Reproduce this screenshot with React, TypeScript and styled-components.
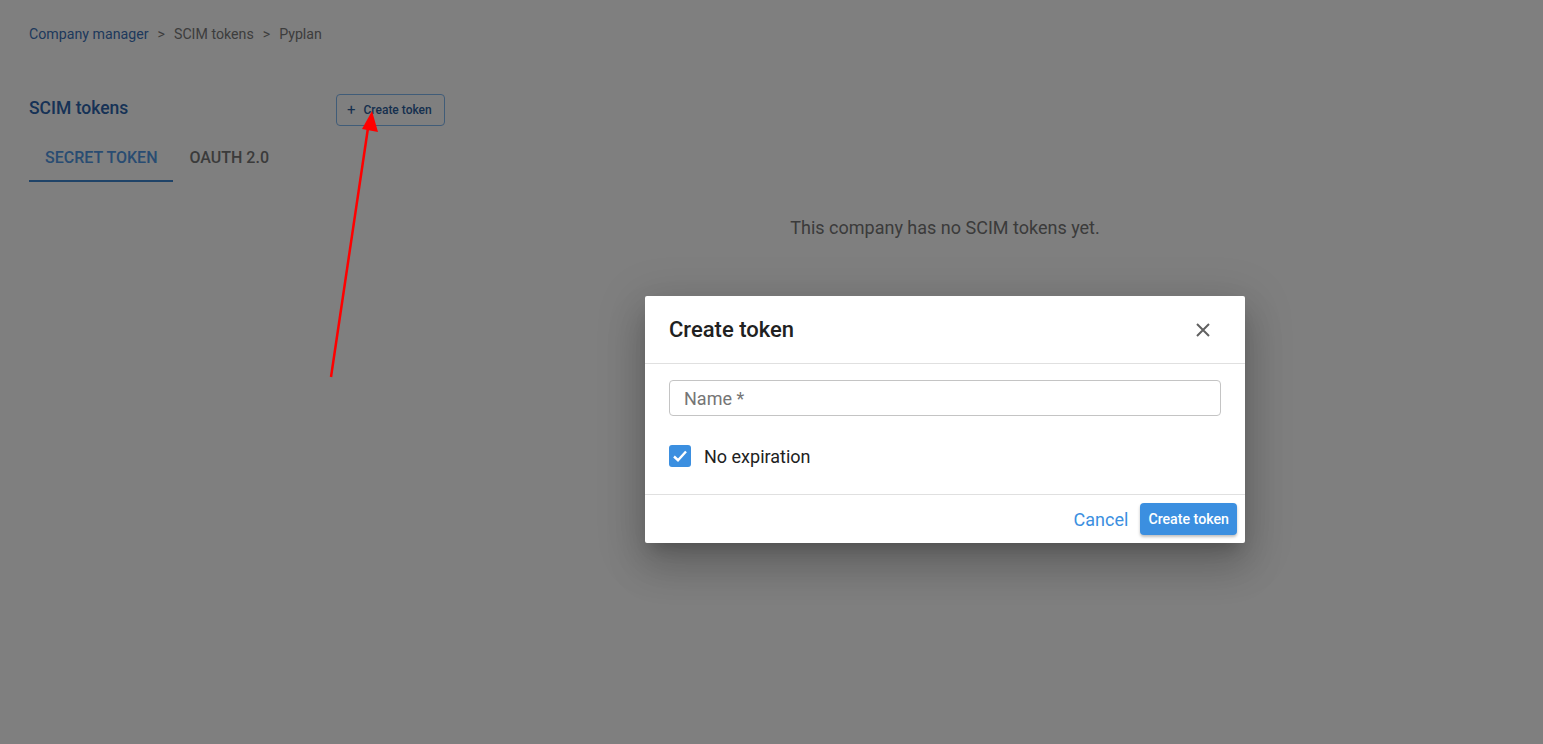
import styled, { createGlobalStyle } from 'styled-components'

const GlobalStyle = createGlobalStyle`
  html, body {
    margin: 0;
    padding: 0;
    background: #ffffff;
    font-family: Roboto, "Liberation Sans", Arial, sans-serif;
  }
  * {
    box-sizing: border-box;
  }
`

const primary = '#3b8fe0'

const Page = styled.div`
  position: relative;
  width: 1543px;
  height: 744px;
  overflow: hidden;
  padding: 24px 29px 0 29px;
`

const Breadcrumb = styled.div`
  display: flex;
  align-items: center;
  gap: 9px;
  height: 20px;
  font-size: 14.2px;
  color: #7a7a7a;
`

const Crumb = styled.span<{ $link?: boolean }>`
  color: ${(p) => (p.$link ? '#3c72b8' : '#7a7a7a')};
`

const HeaderRow = styled.div`
  display: flex;
  align-items: center;
  margin-top: 50px;
  height: 32px;
`

const Title = styled.h2`
  margin: 0 0 5px 0;
  width: 307px;
  font-size: 17.5px;
  font-weight: 500;
  color: #2c64ac;
`

const OutlineButton = styled.button`
  display: flex;
  align-items: center;
  gap: 8px;
  height: 32px;
  padding: 0 12px 0 10px;
  border: 1px solid #80b8f0;
  border-radius: 4px;
  background: transparent;
  font-family: inherit;
  font-size: 12px;
  font-weight: 500;
  color: #2c5e9c;
`

const Plus = styled.span`
  font-size: 15px;
  font-weight: 400;
  line-height: 1;
`

const Tabs = styled.div`
  display: flex;
  margin-top: 8px;
`

const Tab = styled.div<{ $active?: boolean }>`
  height: 48px;
  padding: 0 16px;
  display: flex;
  align-items: center;
  font-size: 16px;
  font-weight: 500;
  color: ${(p) => (p.$active ? '#5299e4' : '#767676')};
  border-bottom: 2px solid ${(p) => (p.$active ? '#3f86d0' : 'transparent')};
`

const Empty = styled.div`
  margin: 35px -29px 0 318px;
  text-align: center;
  font-size: 18px;
  color: #767676;
`

const Overlay = styled.div`
  position: absolute;
  inset: 0;
  background: rgba(0, 0, 0, 0.5);
  display: flex;
  justify-content: center;
  align-items: flex-start;
  padding: 296px 0 0 347px;
`

const Dialog = styled.div`
  width: 600px;
  background: #ffffff;
  border-radius: 2px;
  box-shadow: 0 11px 15px -7px rgba(0, 0, 0, 0.2), 0 24px 38px 3px rgba(0, 0, 0, 0.14),
    0 9px 46px 8px rgba(0, 0, 0, 0.12);
  display: flex;
  flex-direction: column;
`

const DialogHeader = styled.div`
  height: 68px;
  padding: 0 24px;
  display: flex;
  align-items: center;
  justify-content: space-between;
  border-bottom: 1px solid #e0e0e0;
`

const DialogTitle = styled.h3`
  margin: 0;
  font-size: 22px;
  font-weight: 500;
  color: #212121;
`

const CloseButton = styled.button`
  width: 28px;
  height: 28px;
  margin-right: 4px;
  padding: 0;
  border: none;
  background: transparent;
  display: flex;
  align-items: center;
  justify-content: center;
`

const DialogBody = styled.div`
  padding: 16px 24px 27px 24px;
  border-bottom: 1px solid #e0e0e0;
`

const Input = styled.input`
  width: 100%;
  height: 36px;
  padding: 0 14px;
  border: 1px solid #c4c4c4;
  border-radius: 4px;
  font-family: inherit;
  font-size: 18px;
  color: #212121;
  outline: none;
  &::placeholder {
    color: #757575;
  }
`

const CheckRow = styled.label`
  display: flex;
  align-items: center;
  gap: 13px;
  margin-top: 29px;
  font-size: 18px;
  color: #212121;
`

const Box = styled.span`
  width: 22px;
  height: 22px;
  border-radius: 3px;
  background: ${primary};
  display: flex;
  align-items: center;
  justify-content: center;
`

const DialogFooter = styled.div`
  height: 48px;
  padding: 0 8px;
  display: flex;
  align-items: center;
  justify-content: flex-end;
  gap: 12px;
`

const TextButton = styled.button`
  border: none;
  background: transparent;
  padding: 0;
  font-family: inherit;
  font-size: 18px;
  color: ${primary};
`

const PrimaryButton = styled.button`
  height: 32px;
  padding: 0 8px;
  border: none;
  border-radius: 4px;
  background: ${primary};
  color: #ffffff;
  font-family: inherit;
  font-size: 14.2px;
  font-weight: 500;
  box-shadow: 0 2px 3px rgba(0, 0, 0, 0.25);
`

const Annotation = styled.svg`
  position: absolute;
  left: 0;
  top: 0;
  pointer-events: none;
`

function App() {
  return (
    <>
      <GlobalStyle />
      <Page>
        <Breadcrumb>
          <Crumb $link>Company manager</Crumb>
          <Crumb>&gt;</Crumb>
          <Crumb>SCIM tokens</Crumb>
          <Crumb>&gt;</Crumb>
          <Crumb>Pyplan</Crumb>
        </Breadcrumb>
        <HeaderRow>
          <Title>SCIM tokens</Title>
          <OutlineButton>
            <Plus>+</Plus>
            Create token
          </OutlineButton>
        </HeaderRow>
        <Tabs>
          <Tab $active>SECRET TOKEN</Tab>
          <Tab>OAUTH 2.0</Tab>
        </Tabs>
        <Empty>This company has no SCIM tokens yet.</Empty>

        <Overlay>
          <Dialog>
            <DialogHeader>
              <DialogTitle>Create token</DialogTitle>
              <CloseButton>
                <svg width="14" height="14" viewBox="0 0 14 14">
                  <path d="M1 1 L13 13 M13 1 L1 13" stroke="#616161" strokeWidth="2" />
                </svg>
              </CloseButton>
            </DialogHeader>
            <DialogBody>
              <Input placeholder="Name *" />
              <CheckRow>
                <Box>
                  <svg width="18" height="18" viewBox="0 0 18 18">
                    <path d="M3 9.5 L7 13.2 L15 4.5" fill="none" stroke="#fff" strokeWidth="2.4" />
                  </svg>
                </Box>
                No expiration
              </CheckRow>
            </DialogBody>
            <DialogFooter>
              <TextButton>Cancel</TextButton>
              <PrimaryButton>Create token</PrimaryButton>
            </DialogFooter>
          </Dialog>
        </Overlay>

        <Annotation width="1543" height="744">
          <line x1="331" y1="377" x2="368" y2="128" stroke="#ff0000" strokeWidth="2.5" />
          <polygon points="372,111 378,132 362,129" fill="#ff0000" />
        </Annotation>
      </Page>
    </>
  )
}

export default App
